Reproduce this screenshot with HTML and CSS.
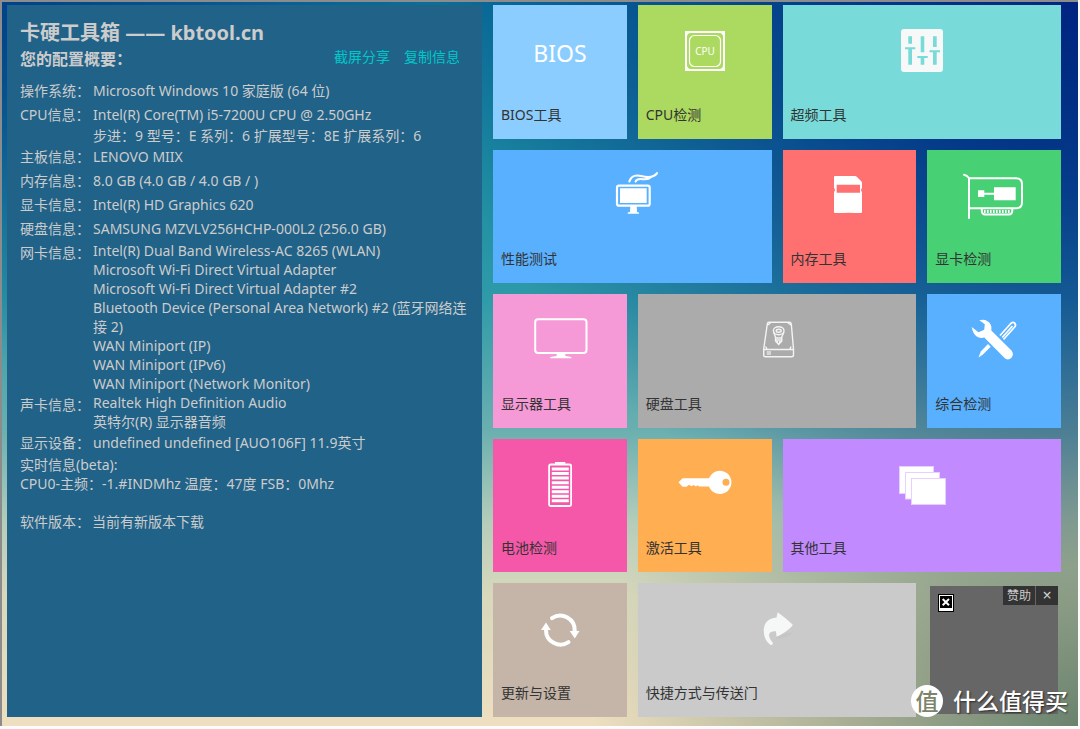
FILE: index.html
```html
<!DOCTYPE html>
<html lang="zh-CN">
<head>
<meta charset="utf-8">
<meta name="viewport" content="width=device-width, initial-scale=1">
<title>卡硬工具箱</title>
<link rel="stylesheet" href="styles.css">
</head>
<body>
<div class="window">
  <main class="summary">
    <h1 class="title">卡硬工具箱 —— kbtool.cn</h1>
    <div class="subhead">
      <h2 class="subtitle">您的配置概要：</h2>
      <nav class="links">
        <a href="#share">截屏分享</a>
        <a href="#copy">复制信息</a>
      </nav>
    </div>
    <dl class="specs">
      <div class="spec"><dt>操作系统：</dt><dd>Microsoft Windows 10 家庭版 (64 位)</dd></div>
      <div class="spec"><dt>CPU信息：</dt><dd>Intel(R) Core(TM) i5-7200U CPU @ 2.50GHz<p class="detail">步进：9 型号：E 系列：6 扩展型号：8E 扩展系列：6</p></dd></div>
      <div class="spec"><dt>主板信息：</dt><dd>LENOVO MIIX</dd></div>
      <div class="spec"><dt>内存信息：</dt><dd>8.0 GB (4.0 GB / 4.0 GB / )</dd></div>
      <div class="spec"><dt>显卡信息：</dt><dd>Intel(R) HD Graphics 620</dd></div>
      <div class="spec"><dt>硬盘信息：</dt><dd>SAMSUNG MZVLV256HCHP-000L2 (256.0 GB)</dd></div>
      <div class="spec spec-list"><dt>网卡信息：</dt><dd>
        <p>Intel(R) Dual Band Wireless-AC 8265 (WLAN)</p>
        <p>Microsoft Wi-Fi Direct Virtual Adapter</p>
        <p>Microsoft Wi-Fi Direct Virtual Adapter #2</p>
        <p>Bluetooth Device (Personal Area Network) #2 (蓝牙网络连接 2)</p>
        <p>WAN Miniport (IP)</p>
        <p>WAN Miniport (IPv6)</p>
        <p>WAN Miniport (Network Monitor)</p>
      </dd></div>
      <div class="spec spec-list"><dt>声卡信息：</dt><dd>
        <p>Realtek High Definition Audio</p>
        <p>英特尔(R) 显示器音频</p>
      </dd></div>
      <div class="spec"><dt>显示设备：</dt><dd>undefined undefined [AUO106F] 11.9英寸</dd></div>
    </dl>
    <div class="live">
      <p>实时信息(beta):</p>
      <p>CPU0-主频：-1.#INDMhz 温度：47度 FSB：0Mhz</p>
    </div>
    <dl class="version"><dt>软件版本：</dt><dd>当前有新版本下载</dd></dl>
  </main>

  <section class="tiles">
    <button class="tile sky" type="button"><span class="word">BIOS</span><span class="name">BIOS工具</span></button>

    <button class="tile lime" type="button">
      <svg class="icon" viewBox="0 0 64 56" fill="none" stroke="#fff">
        <path fill="#fff" stroke="none" fill-rule="evenodd" d="M12 8H52V48H12ZM18 10Q14 10 14 14V42Q14 46 18 46H46Q50 46 50 42V14Q50 10 46 10Z"/>
        <rect x="16.5" y="12.5" width="31" height="31" rx="5" stroke-width="1.2"/>
        <text class="chip" x="32" y="32" text-anchor="middle">CPU</text>
      </svg><span class="name">CPU检测</span></button>

    <button class="tile aqua wide" type="button">
      <svg class="icon" viewBox="0 0 64 56">
        <rect x="11" y="6" width="42" height="43" rx="3" fill="#f7f9f9"/>
        <path fill="#78dad9" d="M18.3 13.3H22V20.7H18.3ZM15 24.3H25.3V26.3H22V41.7H18.3V26.3H15ZM30.7 13.3H34.3V29.3H30.7ZM27.3 33H37.7V35H34.3V41.7H30.7V35H27.3ZM43 13.3H46.7V24H43ZM39.5 27.3H50V29.3H46.7V41.7H43V29.3H39.5Z"/>
      </svg><span class="name">超频工具</span></button>

    <button class="tile blue wide" type="button">
      <svg class="icon" viewBox="0 0 64 56" fill="none" stroke="#fff">
        <rect x="17" y="17.7" width="32.7" height="20" rx="2" stroke-width="2.2"/>
        <path fill="#fff" stroke="none" d="M20 20.2H46.7V35H20ZM30.3 38H36.7L37 44L39 44.6V45.7H27.7V44.6L30 44Z"/>
        <path stroke-width="2.2" stroke-linecap="round" d="M29.4 13.5C31 8 36 6.7 41 8C48 9.8 54 9.5 57 5.2"/>
        <path stroke-width="2" stroke-linecap="round" d="M35.5 13.6C37 9.8 41 11.4 45 11.3Q49 11.2 51 9"/>
      </svg><span class="name">性能测试</span></button>

    <button class="tile red" type="button">
      <svg class="icon" viewBox="0 0 64 56" fill="#fff">
        <path fill-rule="evenodd" d="M18 8H38Q39 8 40 9L44 13Q45 14 45 15V20L44.2 21V23L45 24V44Q45 45 44 45H37Q31 44.4 26 45H18Q17 45 17 44V24L17.8 23V21L17 20V9Q17 8 18 8ZM19.7 16.7V24.7H43V16.7Z"/>
      </svg><span class="name">内存工具</span></button>

    <button class="tile green" type="button">
      <svg class="icon" viewBox="0 0 64 56" fill="none" stroke="#fff" stroke-width="2">
        <path stroke-linecap="round" d="M2 6.7Q5 7.5 7 10V50M7 10.3H54Q60 10.3 60 16V34.5Q60 40.3 54 40.3H7"/>
        <path d="M19.8 41V43Q20 46.5 23 46.5H47Q50 46.5 50.3 43V41"/>
        <path stroke-width="3" stroke-dasharray="1.6 1.4" d="M22 43.5H49"/>
        <path fill="#fff" stroke="none" d="M32 19.3H53.7V32.3H32V26.8H22.3V29H16V22.3H22.3V24.8H32Z"/>
      </svg><span class="name">显卡检测</span></button>

    <button class="tile pink" type="button">
      <svg class="icon" viewBox="0 0 64 56" fill="none" stroke="#fff" stroke-width="2">
        <rect x="7.2" y="7.2" width="51.3" height="33.7" rx="3"/>
        <path fill="#fff" stroke="none" d="M28.7 41.5H37.3V44L43.3 45V46.3H22.3V45L28.7 44Z"/>
      </svg><span class="name">显示器工具</span></button>

    <button class="tile gray wide" type="button">
      <svg class="icon" viewBox="0 0 64 56" fill="none" stroke="#f4f4f4" stroke-width="1.4">
        <path d="M24 10.3H44.5Q46 10.3 46.3 12L48.5 37V43Q48.5 44.8 46.5 44.8H20.5Q18.7 44.8 18.7 43V37L22.3 12Q22.6 10.3 24 10.3ZM18.7 37.5H48.5M22.8 13L25.5 11M43 11L46 13M20.5 34.5L22 37M46 34.5L45 37"/>
        <ellipse cx="33.7" cy="18.7" rx="5.3" ry="4"/>
        <ellipse cx="33.7" cy="18.7" rx="2.5" ry="1.5"/>
        <path d="M28.5 20L30.5 25V29L33.7 32.5L36.8 29V25L39 20M30.5 26H36.8M31 28H36.5M32.5 29V31M34.7 29V31"/>
        <path fill="#f4f4f4" fill-opacity=".6" stroke="none" d="M21.7 39H26V43H21.7Z"/>
      </svg><span class="name">硬盘工具</span></button>

    <button class="tile blue" type="button">
      <svg class="icon" viewBox="0 0 64 56" fill="none" stroke="#fff">
        <path fill="#fff" stroke="none" d="M16.5 45.5L18.8 39.5L26 32L28.7 34.7L21.2 42.2Z"/>
        <path stroke-width="1.7" d="M38 23.5L47.5 13L49 11.3Q51 9.5 52.8 11.2Q54.3 13.2 52.7 15L41.5 27.5M40.3 25.5L50.5 14"/>
        <path fill="#fff" stroke="none" d="M17.3 8.3C22 6.8 27 8.6 29 13.2C29.6 15.5 29.4 17.2 29.3 18.5L49.5 38.5C51.5 41 51.3 44 49.3 46C47 48 44.5 47.8 42.3 45.7L22.3 25.5C17 27.2 11 24 9.7 15L16.5 20.3L22.2 17.8L22.8 12.3Z"/>
      </svg><span class="name">综合检测</span></button>

    <button class="tile rose" type="button">
      <svg class="icon" viewBox="0 0 64 56" fill="none" stroke="#fff">
        <rect x="21.1" y="7.5" width="22" height="41.5" rx="1.5" stroke-width="1.8"/>
        <path fill="#fff" stroke="none" d="M27 5H37.3V8H27Z"/>
        <path stroke-width="17" stroke-dasharray="3 1.55" d="M32.3 10.5V46.8"/>
      </svg><span class="name">电池检测</span></button>

    <button class="tile orange" type="button">
      <svg class="icon" viewBox="0 0 64 56" fill="#fff">
        <path fill-rule="evenodd" d="M5.5 25.3L9.7 21.3H36A11.6 11.6 0 1 1 36 29.5H26L24.5 28.3L23 29.5L20.5 28L18.5 29.3L16 27.7L13.5 29.7H9.5ZM53 21.8A3.5 3.5 0 1 0 53 28.8A3.5 3.5 0 1 0 53 21.8Z"/>
      </svg><span class="name">激活工具</span></button>

    <button class="tile violet wide" type="button">
      <svg class="icon" viewBox="0 0 64 56" fill="#fff" stroke="#e6d0ff">
        <rect x="9.5" y="9.5" width="34" height="27"/>
        <rect x="15.5" y="15.5" width="34" height="26.5"/>
        <rect x="21.5" y="21.5" width="34" height="26"/>
      </svg><span class="name">其他工具</span></button>

    <button class="tile taupe" type="button">
      <svg class="icon" viewBox="0 0 64 56" fill="none" stroke="#fff" stroke-width="4" stroke-linecap="round">
        <path d="M24 17.2A14.5 14.5 0 0 1 46.7 30M18 29A14.5 14.5 0 0 0 40.5 41.2"/>
        <path fill="#fff" stroke="none" d="M41.7 30H51.5L46.8 37.5ZM13 29H22.8L18 21.5Z"/>
      </svg><span class="name">更新与设置</span></button>

    <button class="tile silver wide" type="button">
      <svg class="icon" viewBox="0 0 64 56">
        <path fill="#bebebe" opacity=".4" d="M31 36Q39 31 47 32Q44 37 31 38Z"/>
        <path fill="#f6f8f8" d="M32.7 11.3Q40 16.5 47.3 23.3Q48 24 47.2 25Q40 32.5 31.5 35.7L31 30.3Q24 30 24 34.5Q24.3 38 28 42Q27.5 44.5 25.2 43.7Q18.7 39 18.7 29Q19.5 17.5 31.5 16.5Z"/>
      </svg><span class="name">快捷方式与传送门</span></button>

    <aside class="sponsor">
      <svg class="missing" viewBox="0 0 16 18" role="img" aria-label="图片">
        <path fill="#000" d="M0 0H16V18H0Z"/>
        <path fill="#fff" d="M1 1H15V17H1Z"/>
        <path fill="#000" d="M2 2H14V14H2Z"/>
        <path stroke="#fff" stroke-width="2" d="M4.7 5L11 11.3M11 5L4.7 11.3"/>
      </svg>
      <div class="sponsor-bar">
        <span class="sponsor-label">赞助</span>
        <button class="close" type="button" aria-label="关闭">×</button>
      </div>
    </aside>
  </section>
</div>
<div class="watermark"><span class="seal">值</span><span>什么值得买</span></div>
</body>
</html>
```
FILE: styles.css
```css
* {
  box-sizing: border-box;
}

body {
  position: relative;
  margin: 0;
  padding: 0 2px 3px 0;
  background: #fcfcfc;
  color: #ccc;
  font: 14px/19px "Noto Sans", "Noto Sans CJK SC", sans-serif;
}

h1,
h2,
p,
dl,
dd {
  margin: 0;
}

button {
  border: 0;
  font: inherit;
  cursor: pointer;
}

.window {
  display: grid;
  grid-template-columns: 475fr 568fr;
  gap: 11px;
  min-height: calc(100vh - 3px);
  padding: 3px 17px 9px 5px;
  border-top: 2px solid #8c8c8c;
  border-left: 2px solid #8c8c8c;
  background:
    radial-gradient(ellipse 40% 50% at 0 0, rgba(0, 60, 135, 0.9) 0, rgba(0, 60, 135, 0) 100%),
    radial-gradient(ellipse 60% 78% at 100% 0, #002480 0, rgba(0, 42, 132, 0.85) 30%, rgba(0, 50, 140, 0) 100%),
    radial-gradient(ellipse 45% 60% at 100% 100%, #6a836e 0, rgba(106, 131, 110, 0) 100%),
    linear-gradient(#0a6f98 0, #1a88a0 20%, #2f9ba9 41%, #6aafb0 59%, #b5cdba 72%, #d8d8bc 82%, #eedfc0 100%);
}

.summary {
  min-width: 0;
  padding: 14px 8px 14px 13px;
  background: #216288;
}

.title {
  font-size: 20px;
  line-height: 28px;
}

.subhead {
  display: flex;
  justify-content: space-between;
  align-items: flex-start;
  margin-bottom: 8px;
  padding-right: 14px;
}

.subtitle {
  font-size: 16px;
  line-height: 24px;
}

.links {
  display: flex;
  gap: 14px;
}

.links a {
  color: #00c8c8;
  text-decoration: none;
}

.spec {
  display: grid;
  grid-template-columns: 73px 1fr;
  line-height: 24px;
}

.spec .detail {
  line-height: 18px;
}

.spec-list dd {
  line-height: 19px;
}

.version {
  display: grid;
  grid-template-columns: 72px 1fr;
  margin-top: 19px;
}

.tiles {
  display: grid;
  grid-template-columns: repeat(4, 1fr);
  grid-template-rows: repeat(5, 1fr);
  gap: 11px;
}

.tile {
  display: flex;
  flex-direction: column;
  align-items: center;
  justify-content: space-between;
  padding: 18px 8px 14px;
  color: #333;
}

.wide {
  grid-column: span 2;
}

.icon {
  width: 64px;
  height: 56px;
}

.chip {
  fill: #fff;
  stroke: none;
  font-size: 10px;
}

.word {
  color: #fff;
  font-size: 23px;
  line-height: 60px;
}

.name {
  align-self: flex-start;
  line-height: 20px;
}

.sky { background: #8bcdff; }
.lime { background: #acd95f; }
.aqua { background: #78dad9; }
.blue { background: #58b0ff; }
.red { background: #ff7070; }
.green { background: #48d075; }
.pink { background: #f59ad6; }
.gray { background: #ababab; }
.rose { background: #f558a8; }
.orange { background: #ffae52; }
.violet { background: #c28aff; }
.taupe { background: #c4b5a8; }
.silver { background: #cacaca; }

.sponsor {
  display: flex;
  align-items: flex-start;
  justify-content: space-between;
  margin: 3px;
  background: #666;
}

.missing {
  width: 16px;
  height: 18px;
  margin: 8px;
}

.sponsor-bar {
  display: flex;
  gap: 1px;
  font-size: 12px;
  line-height: 19px;
}

.sponsor-label,
.close {
  padding: 0 4px;
  background: #333;
  color: #ccc;
}

.close {
  width: 22px;
  font-size: 16px;
}

.watermark {
  position: absolute;
  right: 12px;
  bottom: 12px;
  display: flex;
  align-items: center;
  gap: 10px;
  color: #fff;
  font-size: 23px;
  font-weight: 500;
  line-height: 32px;
  text-shadow: 1px 1px 2px rgba(0, 0, 0, 0.6);
}

.seal {
  width: 32px;
  border-radius: 50%;
  background: #fff;
  color: #7b8468;
  text-align: center;
  text-shadow: none;
}
```
